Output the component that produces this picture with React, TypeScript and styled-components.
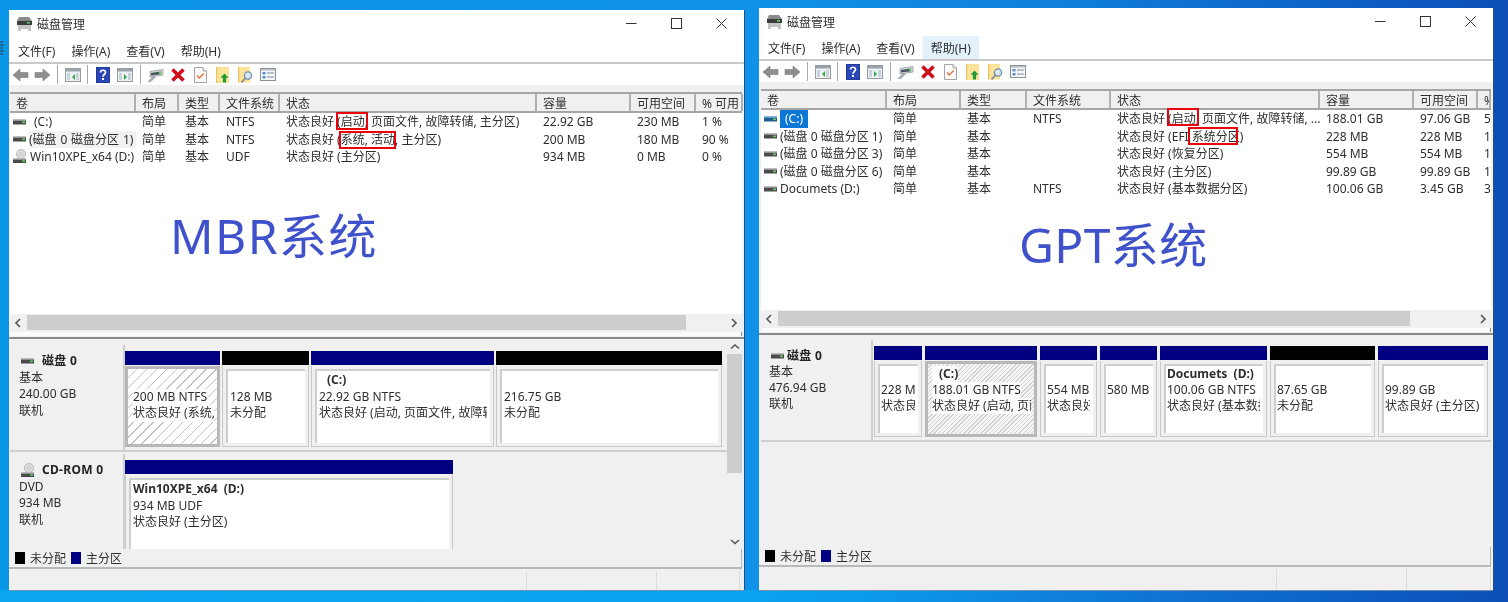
import React from 'react';
import styled, { createGlobalStyle } from 'styled-components';

const Global = createGlobalStyle`
  html, body { margin: 0; padding: 0; width: 1508px; height: 602px; overflow: hidden; }
  body { font-family: "Noto Sans", "Noto Sans CJK SC", sans-serif; font-size: 12px; color: #2e2e2e; }
  * { box-sizing: border-box; }
`;

const Desktop = styled.div`
  position: relative; width: 1508px; height: 602px; display: flex; gap: 15px; padding-left: 9px; overflow: hidden;
  background:
    linear-gradient(90deg, #0aa6f0 0%, #0aa2ee 50%, #0a82dc00 70%) 0 590px / 100% 12px no-repeat,
    linear-gradient(90deg, #0a96e8 0%, #1092e8 50%, #0f7cdc 72%, #0c4eb6 100%);
  filter: blur(0.35px);
`;
const EdgeMark = styled.svg` position: absolute; left: 0; top: 41px; `;
const Win = styled.section<{ $w: number; $top: number; $h: number }>`
  position: relative; width: ${p => p.$w}px; height: ${p => p.$h}px; margin-top: ${p => p.$top}px;
  background: #f0f0f0; display: flex; flex-direction: column; flex: none;
  box-shadow: 1px 0 0 #24507f, 0 1px 0 #6f8fae;
`;
const TitleBar = styled.header`
  height: 27px; flex: none; background: #fff; display: flex; align-items: center; padding-left: 7px;
`;
const TitleText = styled.span` margin-left: 4px; flex: 1; `;
const Ctl = styled.span` width: 45px; height: 27px; display: flex; align-items: center; justify-content: center; `;
const MenuBar = styled.nav<{ $h: number }>`
  height: ${p => p.$h}px; flex: none; background: #fff; display: flex; align-items: flex-end; padding-left: 1px;
  border-bottom: 2px solid #c9c9c9;
`;
const MenuItem = styled.span<{ $on?: boolean }>`
  padding: 0 8px; height: 23px; line-height: 25px; white-space: nowrap; flex: none;
  background: ${p => p.$on ? '#e3f1fc' : 'transparent'};
`;
const ToolBar = styled.div`
  height: 21px; flex: none; background: #fff; display: flex; align-items: center;
`;
const ToolBtn = styled.span` width: 22.5px; height: 21px; display: flex; align-items: center; justify-content: center; flex: none; `;
const ToolSep = styled.span` width: 7.5px; height: 19px; flex: none; display: flex; justify-content: center; &::before { content: ""; width: 1px; background: #a8a8a8; } `;
const Strip = styled.div` height: 7px; flex: none; background: #f0f0f0; `;

const ListFrame = styled.div<{ $h: number; $inset: number }>`
  height: ${p => p.$h}px; flex: none; display: flex; flex-direction: column; padding: 0 2px 0 ${p => p.$inset}px;
  border-bottom: 2px solid #8a8a8a; background: #f0f0f0;
`;
const ListBody = styled.div` flex: 1; min-height: 0; background: #fff; display: flex; flex-direction: column; overflow: hidden; `;
const Row = styled.div<{ $cols: string }>`
  display: grid; grid-template-columns: ${p => p.$cols}; height: 17.5px; line-height: 18.5px; flex: none;
`;
const HeadRow = styled(Row)`
  height: 21px; line-height: 20px; border-top: 2px solid #a6a6a6; border-bottom: 2px solid #a6a6a6;
`;
const HeadCell = styled.span`
  padding-left: 6px; background: #f0f0f0; border-right: 2px solid #b0b0b0; white-space: nowrap; overflow: hidden;
`;
const Cell = styled.span` padding-left: 6px; white-space: nowrap; overflow: hidden; `;
const VolCell = styled.span` padding-left: 3px; display: flex; align-items: center; gap: 3px; white-space: nowrap; overflow: hidden; `;
const VolName = styled.span<{ $tone?: 'sel' | 'soft'; $pad?: boolean }>`
  padding: 0 ${p => p.$pad ? 5 : 0}px; height: 17.5px;
  background: ${p => p.$tone === 'sel' ? '#0a78d4' : p.$tone === 'soft' ? '#f2f2f2' : 'transparent'};
  color: ${p => p.$tone === 'sel' ? '#fff' : 'inherit'};
  ${p => p.$tone === 'soft' ? 'flex: 1; word-spacing: 0.7px;' : ''}
`;
const HScroll = styled.div`
  height: 15px; flex: none; background: #f0f0f0; display: flex; align-items: center; margin-top: 1px;
`;
const ScrollEnd = styled.span` width: 17px; height: 15px; display: flex; align-items: center; justify-content: center; flex: none; `;
const HTrack = styled.div` flex: 1; height: 15px; `;
const HThumb = styled.div<{ $w: number }>` height: 15px; width: ${p => p.$w}px; background: #cdcdcd; `;
const ListGap = styled.div` height: 7px; flex: none; display: flex; flex-direction: column; justify-content: flex-end; `;
const WhiteRule = styled.div` height: 4px; margin-bottom: 1px; background: #fbfbfb; border-right: 1px solid #8a8a8a; `;

const Pane = styled.div<{ $h: number; $inset: number }>`
  height: ${p => p.$h}px; flex: none; display: flex; padding: 0 2px 0 ${p => p.$inset}px; overflow: hidden;
`;
const DiskArea = styled.div<{ $top: number }>` flex: 1; min-width: 0; padding-top: ${p => p.$top}px; display: flex; flex-direction: column; gap: 2px; `;
const VScroll = styled.div`
  width: 15px; flex: none; display: flex; flex-direction: column; align-items: stretch;
`;
const VEnd = styled.span` height: 14px; margin-top: 1px; display: flex; align-items: center; justify-content: center; flex: none; `;
const VTrack = styled.div` flex: 1; `;
const VThumb = styled.div` height: 119px; background: #cdcdcd; `;
const DiskRow = styled.div<{ $h: number }>`
  height: ${p => p.$h}px; flex: none; display: flex; border-bottom: 2px solid #cfcfcf;
`;
const DiskLabel = styled.div<{ $w: number; $pad: number; $lh: number; $top: number }>`
  width: ${p => p.$w}px; flex: none; padding: ${p => p.$top}px 0 0 ${p => p.$pad}px; line-height: ${p => p.$lh}px;
  background: #f0f0f0; box-shadow: 2px 0 0 #cfcfcf;
`;
const DiskName = styled.div<{ $gap: number; $h: number }>`
  display: flex; align-items: center; gap: ${p => p.$gap}px; font-weight: 700; color: #222; height: ${p => p.$h}px;
  letter-spacing: 0.3px;
`;
const NameIcon = styled.span` margin-left: 2px; display: flex; `;
const Parts = styled.div<{ $gap: number }>`
  display: flex; gap: ${p => p.$gap}px; padding-top: 6px; margin-left: ${p => p.$gap}px;
`;
const Part = styled.div<{ $w: number }>` width: ${p => p.$w}px; flex: none; display: flex; flex-direction: column; `;
const Bar = styled.div<{ $black?: boolean }>` height: 14px; flex: none; background: ${p => p.$black ? '#000' : '#000080'}; `;
const Body = styled.div<{ $h: number; $hatch?: 'wide' | 'tight' }>`
  height: ${p => p.$h}px; margin-top: 1px; padding: 3px; background: #f0f0f0; flex: none;
  border: 1px solid #c8c8c8; border-top: none;
  ${p => p.$hatch ? 'border: 3px solid #b8b8b8; padding: 0;' : ''}
`;
const Inner = styled.div<{ $hatch?: 'wide' | 'tight'; $pad: number; $top: number; $lh: number }>`
  height: 100%; overflow: hidden; white-space: pre; line-height: ${p => p.$lh}px;
  padding: ${p => p.$top + (p.$hatch ? 2 : 0)}px 0 0 ${p => p.$pad + (p.$hatch ? 3 : 0)}px;
  background: #fff;
  ${p => p.$hatch ? '' : 'border-top: 2px solid #cecece; border-left: 2px solid #cecece;'}
  ${p => p.$hatch === 'wide' ? 'background: repeating-linear-gradient(135deg, #fff 0 6px, #c4c4c4 6px 7px);' : ''}
  ${p => p.$hatch === 'tight' ? 'background: repeating-linear-gradient(135deg, #f6f6f6 0 2px, #d2d2d2 2px 3px);' : ''}
`;
const TextLine = styled.div<{ $bold?: boolean; $indent?: number; $plate?: boolean }>`
  font-weight: ${p => p.$bold ? 700 : 400}; padding-left: ${p => p.$indent || 0}px;
  max-width: calc(100% - 3px); overflow: hidden;
  ${p => p.$plate ? 'background: #ffffffd8; width: fit-content;' : ''}
`;
const Legend = styled.div`
  height: 20px; flex: none; display: flex; align-items: center; padding-left: 6px; margin-right: 2px; background: #f0f0f0;
  border-bottom: 2px solid #b8b8b8; border-right: 1px solid #b8b8b8;
`;
const Swatch = styled.span<{ $c: string }>` width: 10px; height: 12px; background: ${p => p.$c}; margin-right: 5px; flex: none; `;
const LegendText = styled.span` margin-right: 5px; `;
const Status = styled.footer<{ $cols: string }>` flex: 1; display: grid; grid-template-columns: ${p => p.$cols}; margin-top: 2px; background: #f0f0f0; `;
const StatusCell = styled.span` border-right: 1px solid #dcdcdc; `;
const RedBox = styled.span<{ $x: number; $y: number; $w: number; $h: number }>`
  position: absolute; left: ${p => p.$x}px; top: ${p => p.$y}px; width: ${p => p.$w}px; height: ${p => p.$h}px;
  border: 2px solid #e8000a;
`;
const BigLabel = styled.span<{ $x: number; $y: number; $ls: number }>`
  position: absolute; left: ${p => p.$x}px; top: ${p => p.$y}px; font-size: 48px; line-height: 60px; color: #3f52cc;
  white-space: nowrap; letter-spacing: ${p => p.$ls}px;
`;

const AppIcon = () => (
  <svg width="17" height="16" viewBox="0 0 17 16">
    <path d="M3 1h10l3 4v3H1V5z" fill="#8a8a8a" />
    <rect x="1" y="5" width="15" height="4" fill="#3c3c3c" />
    <rect x="11" y="6" width="3" height="1.6" fill="#5fd05f" />
    <path d="M2 9h13v6h-3v-2H5v2H2z" fill="#c4c4c4" />
  </svg>
);
const MinIcon = () => <svg width="11" height="11" viewBox="0 0 11 11"><path d="M0 5.5h10.5" stroke="#333" strokeWidth="1" /></svg>;
const MaxIcon = () => <svg width="11" height="11" viewBox="0 0 11 11"><rect x=".5" y=".5" width="10" height="10" fill="none" stroke="#333" /></svg>;
const CloseIcon = () => <svg width="11" height="11" viewBox="0 0 11 11"><path d="M.5.5l10 10M10.5.5l-10 10" stroke="#333" /></svg>;

const NavArrow = ({ left }: { left?: boolean }) => (
  <svg width="17" height="14" viewBox="0 0 17 14">
    <path d={left ? 'M8 1L1 7l7 6V9.5h8v-5H8z' : 'M9 1l7 6-7 6V9.5H1v-5h8z'} fill="#8f8f8f" stroke="#7a7a7a" strokeWidth=".6" />
  </svg>
);
const PanelIcon = ({ rightArrow }: { rightArrow?: boolean }) => (
  <svg width="16" height="14" viewBox="0 0 16 14">
    <rect x=".5" y=".5" width="15" height="13" fill="#eef2f5" stroke="#9a9a9a" />
    <rect x="1" y="1" width="14" height="2.5" fill="#9aa3ab" />
    <rect x="2" y="5" width="3" height="7" fill="#c5d3df" />
    <rect x="11" y="5" width="3" height="7" fill="#c5d3df" />
    <path d={rightArrow ? 'M7 6l3 3-3 3z' : 'M10 6L7 9l3 3z'} fill="#35a84b" />
  </svg>
);
const HelpIcon = () => (
  <svg width="14" height="16" viewBox="0 0 14 16">
    <rect width="14" height="16" fill="#2b47b5" stroke="#1c2f82" />
    <path d="M4.5 5.5C4.5 2.5 9.5 2.5 9.5 5.5c0 2-2.5 2-2.5 4.2" fill="none" stroke="#fff" strokeWidth="1.7" />
    <rect x="6" y="11" width="2" height="2" fill="#fff" />
  </svg>
);
const DriveTool = () => (
  <svg width="17" height="14" viewBox="0 0 17 14">
    <path d="M3 3.5L16 1.5v5.5L3 9z" fill="#d2d6da" stroke="#8a9095" strokeWidth=".7" />
    <path d="M4 5l10-1.4v2.6L4 7.6z" fill="#47535e" />
    <rect x="12" y="4" width="2.4" height="1.8" fill="#5ed65e" />
    <path d="M5.5 9L1 13.5h3L8.5 9z" fill="#aab0b5" stroke="#868c91" strokeWidth=".5" />
  </svg>
);
const XIcon = () => (
  <svg width="14" height="14" viewBox="0 0 14 14">
    <path d="M1.5 1.5l11 11M12.5 1.5l-11 11" stroke="#cf0f1c" strokeWidth="3.6" />
  </svg>
);
const DocCheck = () => (
  <svg width="13" height="16" viewBox="0 0 13 16">
    <path d="M.5.5h8.5l3.5 3.5v11.5H.5z" fill="#fafafa" stroke="#a5a5a5" />
    <path d="M9 .5V4h3.5" fill="#ececec" stroke="#a5a5a5" />
    <path d="M3 8.5l2.2 2.5L9.8 6.5" fill="none" stroke="#e2703f" strokeWidth="1.4" />
  </svg>
);
const FolderUp = () => (
  <svg width="13" height="16" viewBox="0 0 13 16">
    <rect width="13" height="16" fill="#fbe49a" />
    <rect x="0" y="0" width="1.2" height="16" fill="#e8c25c" />
    <path d="M8.5 6.5l4 4.3h-2.4V15.5H6.9v-4.7H4.5z" fill="#1f9a35" />
  </svg>
);
const FolderFind = () => (
  <svg width="15" height="16" viewBox="0 0 15 16">
    <rect width="12" height="15.5" fill="#fbe49a" />
    <rect x="0" y="0" width="1.2" height="15.5" fill="#e8c25c" />
    <circle cx="10" cy="8.5" r="3.6" fill="#dbe8f4" stroke="#6e8fb0" strokeWidth="1.3" />
    <path d="M7.5 11l-4 4.5" stroke="#7f8c96" strokeWidth="1.8" />
  </svg>
);
const ListIcon = () => (
  <svg width="16" height="13" viewBox="0 0 16 13">
    <rect x=".5" y=".5" width="15" height="12" fill="#f4f6f8" stroke="#8a9299" />
    <rect x="1" y="1" width="14" height="1.6" fill="#bcc3c9" />
    <rect x="2.5" y="4" width="3" height="2.4" fill="#4f8fd0" />
    <rect x="2.5" y="8" width="3" height="2.4" fill="#4f8fd0" />
    <path d="M7 5h7M7 9h7" stroke="#7f8a94" />
  </svg>
);
const Drive = ({ tint }: { tint?: boolean }) => (
  <svg width="13" height="6" viewBox="0 0 13 6">
    <rect y="0" width="13" height="1.5" fill={tint ? '#7ab6e4' : '#bdbdbd'} />
    <rect y="1.5" width="13" height="4" fill={tint ? '#1f5f92' : '#4a4a4a'} />
    <rect x="9" y="2.5" width="3" height="1.6" fill="#63d063" />
  </svg>
);
const CdDrive = () => (
  <svg width="14" height="15" viewBox="0 0 14 15">
    <circle cx="8" cy="5" r="4.6" fill="#dcdcdc" stroke="#a0a0a0" strokeWidth=".6" />
    <circle cx="8" cy="5" r="1.3" fill="#f8f8f8" stroke="#999" strokeWidth=".5" />
    <rect x="0" y="9" width="13" height="1.5" fill="#bbb" />
    <rect x="0" y="10.5" width="13" height="3.5" fill="#4a4a4a" />
    <rect x="9" y="11.2" width="3" height="1.5" fill="#63d063" />
  </svg>
);
const Chev = ({ dir }: { dir: 'l' | 'r' | 'u' | 'd' }) => {
  const d = { l: 'M6 1L2 5l4 4', r: 'M3 1l4 4-4 4', u: 'M1 6.5L5 3l4 3.5', d: 'M1 3l4 3.5L9 3' }[dir];
  return <svg width="10" height="10" viewBox="0 0 10 10"><path d={d} fill="none" stroke="#555" strokeWidth="1.6" /></svg>;
};

type Vol = { icon?: 'cd'; name: string; tone?: 'sel' | 'soft'; pad?: boolean; tint?: boolean; cells: string[] };
type PartT = { w: number; black?: boolean; hatch?: 'wide' | 'tight'; lines: { t: string; bold?: boolean; indent?: number; plate?: boolean }[] };
type DiskT = { h: number; labelW: number; labelPad: number; labelTop: number; lh: number; cd?: boolean; gap: number; name: string; info: string[]; parts: PartT[]; bodyH: number; partGap: number; innerPad: number; innerTop: number };
type Conf = {
  w: number; h: number; top: number; inset: number; listH: number; paneH: number; menuH: number; paneTop: number;
  cols: string; heads: string[]; rows: Vol[]; hot?: boolean; thumb: number; disks: DiskT[]; vscroll?: boolean; statusCols: string;
  boxes: [number, number, number, number][]; label: string; lx: number; ly: number; ls: number;
};

const Toolbar = () => (
  <ToolBar>
    <ToolBtn><NavArrow left /></ToolBtn><ToolBtn><NavArrow /></ToolBtn><ToolSep />
    <ToolBtn><PanelIcon /></ToolBtn><ToolSep />
    <ToolBtn><HelpIcon /></ToolBtn><ToolBtn><PanelIcon rightArrow /></ToolBtn><ToolSep />
    <ToolBtn><DriveTool /></ToolBtn><ToolBtn><XIcon /></ToolBtn><ToolBtn><DocCheck /></ToolBtn>
    <ToolBtn><FolderUp /></ToolBtn><ToolBtn><FolderFind /></ToolBtn><ToolBtn><ListIcon /></ToolBtn>
  </ToolBar>
);

const Window = ({ c }: { c: Conf }) => (
  <Win $w={c.w} $h={c.h} $top={c.top}>
    <TitleBar>
      <AppIcon /><TitleText>磁盘管理</TitleText>
      <Ctl><MinIcon /></Ctl><Ctl><MaxIcon /></Ctl><Ctl><CloseIcon /></Ctl>
    </TitleBar>
    <MenuBar $h={c.menuH}>
      <MenuItem>文件(F)</MenuItem><MenuItem>操作(A)</MenuItem><MenuItem>查看(V)</MenuItem>
      <MenuItem $on={c.hot}>帮助(H)</MenuItem>
    </MenuBar>
    <Toolbar />
    <Strip />
    <ListFrame $h={c.listH} $inset={c.inset}>
      <HeadRow $cols={c.cols}>{c.heads.map((h, i) => <HeadCell key={i}>{h}</HeadCell>)}</HeadRow>
      <ListBody>
        {c.rows.map((r, i) => (
          <Row key={i} $cols={c.cols}>
            <VolCell>
              {r.icon === 'cd' ? <CdDrive /> : <Drive tint={r.tint} />}
              <VolName $tone={r.tone} $pad={r.pad}>{r.name}</VolName>
            </VolCell>
            {r.cells.map((t, j) => <Cell key={j}>{t}</Cell>)}
          </Row>
        ))}
      </ListBody>
      <HScroll>
        <ScrollEnd><Chev dir="l" /></ScrollEnd>
        <HTrack><HThumb $w={c.thumb} /></HTrack>
        <ScrollEnd><Chev dir="r" /></ScrollEnd>
      </HScroll>
      <ListGap><WhiteRule /></ListGap>
    </ListFrame>
    <Pane $h={c.paneH} $inset={c.inset}>
      <DiskArea $top={c.paneTop}>
        {c.disks.map((d, i) => (
          <DiskRow key={i} $h={d.h}>
            <DiskLabel $w={d.labelW} $pad={d.labelPad} $lh={d.lh} $top={d.labelTop}>
              <DiskName $gap={d.gap} $h={d.lh}><NameIcon>{d.cd ? <CdDrive /> : <Drive />}</NameIcon>{d.name}</DiskName>
              {d.info.map((t, j) => <div key={j}>{t}</div>)}
            </DiskLabel>
            <Parts $gap={d.partGap}>
              {d.parts.map((p, j) => (
                <Part key={j} $w={p.w}>
                  <Bar $black={p.black} />
                  <Body $h={d.bodyH} $hatch={p.hatch}>
                    <Inner $hatch={p.hatch} $pad={d.innerPad} $top={d.innerTop} $lh={d.lh}>
                      {p.lines.map((l, k) => <TextLine key={k} $bold={l.bold} $indent={l.indent} $plate={l.plate}>{l.t || '\u00a0'}</TextLine>)}
                    </Inner>
                  </Body>
                </Part>
              ))}
            </Parts>
          </DiskRow>
        ))}
      </DiskArea>
      {c.vscroll ? (
        <VScroll>
          <VEnd><Chev dir="u" /></VEnd>
          <VThumb />
          <VTrack />
          <VEnd><Chev dir="d" /></VEnd>
        </VScroll>
      ) : null}
    </Pane>
    <Legend>
      <Swatch $c="#000" /><LegendText>未分配</LegendText>
      <Swatch $c="#000080" /><LegendText>主分区</LegendText>
    </Legend>
    <Status $cols={c.statusCols}><StatusCell /><StatusCell /><StatusCell /></Status>
    {c.boxes.map((b, i) => <RedBox key={i} $x={b[0]} $y={b[1]} $w={b[2]} $h={b[3]} />)}
    <BigLabel $x={c.lx} $y={c.ly} $ls={c.ls}>{c.label}</BigLabel>
  </Win>
);

const mbr: Conf = {
  w: 735, h: 580, top: 10, inset: 1, listH: 247, paneH: 210, menuH: 27, paneTop: 6,
  cols: '126px 43px 41px 60px 257px 94px 65px 47px',
  heads: ['卷', '布局', '类型', '文件系统', '状态', '容量', '可用空间', '% 可用'],
  rows: [
    { name: '(C:)', pad: true, cells: ['简单', '基本', 'NTFS', '状态良好 (启动, 页面文件, 故障转储, 主分区)', '22.92 GB', '230 MB', '1 %'] },
    { name: '(磁盘 0 磁盘分区 1)', tone: 'soft', cells: ['简单', '基本', 'NTFS', '状态良好 (系统, 活动, 主分区)', '200 MB', '180 MB', '90 %'] },
    { name: 'Win10XPE_x64 (D:)', icon: 'cd', cells: ['简单', '基本', 'UDF', '状态良好 (主分区)', '934 MB', '0 MB', '0 %'] },
  ],
  thumb: 659, vscroll: true, statusCols: '518px 130px 83px',
  disks: [
    {
      h: 107, labelW: 113, labelPad: 9, labelTop: 8, lh: 16.5, gap: 8, name: '磁盘 0', info: ['基本', '240.00 GB', '联机'], bodyH: 81, partGap: 2, innerPad: 2, innerTop: 1,
      parts: [
        { w: 95, hatch: 'wide', lines: [{ t: '' }, { t: '200 MB NTFS', plate: true }, { t: '状态良好 (系统, 活动, 主分区)', plate: true }] },
        { w: 87, black: true, lines: [{ t: '' }, { t: '128 MB' }, { t: '未分配' }] },
        { w: 183, lines: [{ t: '(C:)', bold: true, indent: 8 }, { t: '22.92 GB NTFS' }, { t: '状态良好 (启动, 页面文件, 故障转储, 主分区)' }] },
        { w: 226, black: true, lines: [{ t: '' }, { t: '216.75 GB' }, { t: '未分配' }] },
      ],
    },
    {
      h: 120, labelW: 113, labelPad: 9, labelTop: 8, lh: 16.5, gap: 7, cd: true, name: 'CD-ROM 0', info: ['DVD', '934 MB', '联机'], bodyH: 90, partGap: 2, innerPad: 2, innerTop: 1,
      parts: [
        { w: 328, lines: [{ t: 'Win10XPE_x64  (D:)', bold: true }, { t: '934 MB UDF' }, { t: '状态良好 (主分区)' }] },
      ],
    },
  ],
  boxes: [[327, 102, 32, 18], [330, 121, 57, 18]], label: 'MBR系统', lx: 161, ly: 196, ls: 1.5,
};

const gpt: Conf = {
  w: 734, h: 582, top: 8, inset: 2, listH: 246, paneH: 212, menuH: 26, paneTop: 5,
  cols: '126px 74px 66px 84px 209px 94px 64px 13px',
  heads: ['卷', '布局', '类型', '文件系统', '状态', '容量', '可用空间', '%'],
  hot: true,
  rows: [
    { name: '(C:)', pad: true, tone: 'sel', tint: true, cells: ['简单', '基本', 'NTFS', '状态良好 (启动, 页面文件, 故障转储, ...', '188.01 GB', '97.06 GB', '5'] },
    { name: '(磁盘 0 磁盘分区 1)', cells: ['简单', '基本', '', '状态良好 (EFI 系统分区)', '228 MB', '228 MB', '1'] },
    { name: '(磁盘 0 磁盘分区 3)', cells: ['简单', '基本', '', '状态良好 (恢复分区)', '554 MB', '554 MB', '1'] },
    { name: '(磁盘 0 磁盘分区 6)', cells: ['简单', '基本', '', '状态良好 (主分区)', '99.89 GB', '99.89 GB', '1'] },
    { name: 'Documets (D:)', cells: ['简单', '基本', 'NTFS', '状态良好 (基本数据分区)', '100.06 GB', '3.45 GB', '3'] },
  ],
  thumb: 632, statusCols: '518px 130px 84px',
  disks: [
    {
      h: 102, labelW: 110, labelPad: 8, labelTop: 8, lh: 16, gap: 3, name: '磁盘 0', info: ['基本', '476.94 GB', '联机'], bodyH: 76, partGap: 3, innerPad: 1, innerTop: 0,
      parts: [
        { w: 48, lines: [{ t: '' }, { t: '228 MB' }, { t: '状态良好 (EFI 系统分区)' }] },
        { w: 112, hatch: 'tight', lines: [{ t: '(C:)', bold: true, indent: 7, plate: true }, { t: '188.01 GB NTFS', plate: true }, { t: '状态良好 (启动, 页面文件, 故障转储, 主分区)', plate: true }] },
        { w: 57, lines: [{ t: '' }, { t: '554 MB' }, { t: '状态良好 (恢复分区)' }] },
        { w: 57, lines: [{ t: '' }, { t: '580 MB' }, { t: '' }] },
        { w: 107, lines: [{ t: 'Documets  (D:)', bold: true }, { t: '100.06 GB NTFS' }, { t: '状态良好 (基本数据分区)' }] },
        { w: 105, black: true, lines: [{ t: '' }, { t: '87.65 GB' }, { t: '未分配' }] },
        { w: 110, lines: [{ t: '' }, { t: '99.89 GB' }, { t: '状态良好 (主分区)' }] },
      ],
    },
  ],
  boxes: [[408, 100, 32, 18], [429, 119, 50, 18]], label: 'GPT系统', lx: 260, ly: 207, ls: 0.4,
};

export default function App() {
  return (
    <>
      <Global />
      <Desktop>
        <EdgeMark width="4" height="15" viewBox="0 0 4 15">
          <path d="M0 1h3M0 4h4M0 7h3M0 10h4M0 13h3" stroke="#33404f" strokeWidth="1.2" />
        </EdgeMark>
        <Window c={mbr} />
        <Window c={gpt} />
      </Desktop>
    </>
  );
}
